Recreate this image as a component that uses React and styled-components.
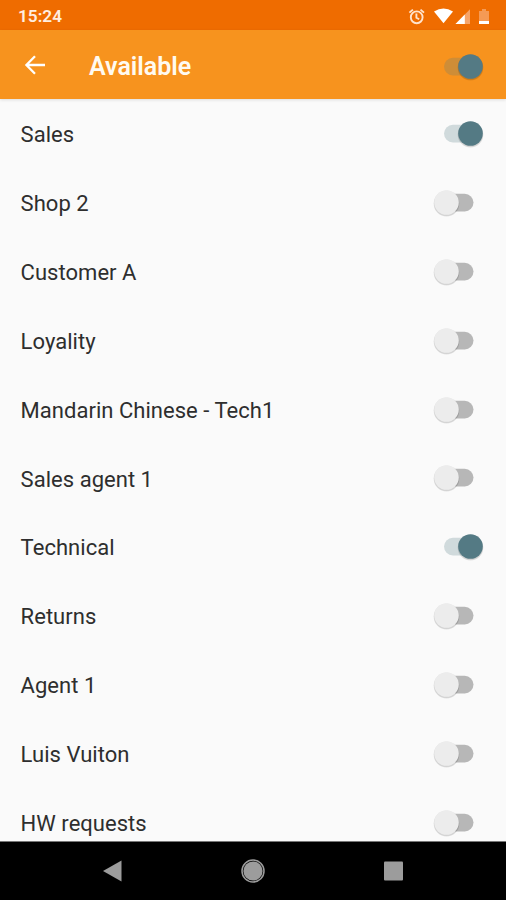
import React, { useState } from "react";
import styled, { createGlobalStyle } from "styled-components";

const GlobalStyle = createGlobalStyle`
  * {
    box-sizing: border-box;
  }
  body {
    margin: 0;
    background-color: #fafafa;
    font-family: Roboto, "Liberation Sans", sans-serif;
  }
`;

const Screen = styled.div`
  display: flex;
  flex-direction: column;
  width: 506px;
  height: 900px;
  overflow: hidden;
  background-color: #fafafa;
`;

const StatusBar = styled.div`
  display: flex;
  flex: none;
  align-items: center;
  justify-content: space-between;
  height: 30px;
  padding: 2px 16px 0 18px;
  background-color: #ef6c00;
  color: #ffeee0;
`;

const Clock = styled.span`
  font-size: 17.2px;
  font-weight: 600;
  line-height: 28px;
`;

const AppBar = styled.header`
  display: flex;
  flex: none;
  align-items: center;
  height: 69px;
  padding: 1px 20px 0 24px;
  background-color: #f7931e;
  box-shadow: 0 1px 3px rgba(0, 0, 0, 0.12);
`;

const BackButton = styled.button`
  display: flex;
  width: 22px;
  height: 22px;
  margin-top: -1px;
  padding: 0;
  border: none;
  background: none;
  cursor: pointer;
`;

const Title = styled.h1`
  flex: 1;
  margin: 3px 0 0 43px;
  color: #fffaf0;
  font-size: 25px;
  font-weight: 600;
  line-height: 30px;
`;

const List = styled.ul`
  flex: 1;
  min-height: 0;
  margin: 0;
  padding: 0;
  overflow: hidden;
  list-style: none;
`;

const Row = styled.li`
  display: flex;
  align-items: center;
  justify-content: space-between;
  height: 68.9px;
  padding: 0 20px 0 20.6px;
`;

const Label = styled.span`
  padding-top: 3.4px;
  color: #2e2e2e;
  font-size: 22px;
  letter-spacing: 0.03px;
  line-height: 28px;
`;

const SwitchButton = styled.button`
  display: flex;
  width: 56px;
  height: 32px;
  margin-top: 1px;
  padding: 0;
  border: none;
  background: none;
  cursor: pointer;

  ${AppBar} & {
    margin-top: 3px;
  }
`;

const NavBar = styled.nav`
  display: flex;
  flex: none;
  align-items: center;
  justify-content: space-between;
  height: 59px;
  padding: 0 101px;
  border-top: 1px solid #777;
  background-color: #000;
`;

const StatusIcons = () => (
  <svg width="76" height="24" viewBox="414 3 76 24">
    <g fill="none" stroke="#ffe3cd" strokeWidth="1.9">
      <circle cx="416.7" cy="16.3" r="5.9" />
      <path d="M416.4 12.5v4.2l2.8 1.6M409.4 11.6l3.5-3M424 11.6l-3.5-3" />
    </g>
    <path d="M434 10.5Q443.5 4.5 453 10.5L443.5 22.3z" fill="#fff" />
    <path d="M470 8.3V23h-14.5z" fill="#f6a469" />
    <path d="M464.8 13.6V23h-9.3z" fill="#fff" />
    <path d="M482 8h4v2h3v13h-10V10h3z" fill="#f59a55" />
    <path d="M479 20h10v3h-10z" fill="#fff" />
  </svg>
);

const StatusIconBox = styled.div`
  display: flex;
  svg {
    overflow: visible;
  }
`;

const Switch = ({ checked, onToggle, label }) => (
  <SwitchButton
    role="switch"
    aria-checked={checked}
    aria-label={label}
    onClick={onToggle}
  >
    <svg width="56" height="32" viewBox="0 0 56 32">
      <rect
        x={checked ? 14 : 8}
        y="6.8"
        width={checked ? 32 : 35.5}
        height="17.6"
        rx="8.8"
        fill={checked ? "#547a84" : "#b7b7b7"}
        fillOpacity={checked ? 0.25 : 1}
      />
      <circle cx={checked ? 40.5 : 16.5} cy="16.8" r="12.8" fill="#000" opacity="0.1" />
      <circle cx={checked ? 40.5 : 16.5} cy="16.2" r="12.7" fill="#000" opacity="0.06" />
      <circle
        cx={checked ? 40.5 : 16.5}
        cy="15.5"
        r="12.3"
        fill={checked ? "#547a84" : "#ececec"}
      />
    </svg>
  </SwitchButton>
);

const initialQueues = [
  { name: "Sales", on: true },
  { name: "Shop 2", on: false },
  { name: "Customer A", on: false },
  { name: "Loyality", on: false },
  { name: "Mandarin Chinese - Tech1", on: false },
  { name: "Sales agent 1", on: false },
  { name: "Technical", on: true },
  { name: "Returns", on: false },
  { name: "Agent 1", on: false },
  { name: "Luis Vuiton", on: false },
  { name: "HW requests", on: false },
];

const App = () => {
  const [available, setAvailable] = useState(true);
  const [queues, setQueues] = useState(initialQueues);

  const toggleQueue = (name) => {
    setQueues(queues.map((q) => (q.name === name ? { ...q, on: !q.on } : q)));
  };

  return (
    <Screen>
      <GlobalStyle />
      <StatusBar>
        <Clock>15:24</Clock>
        <StatusIconBox>
          <StatusIcons />
        </StatusIconBox>
      </StatusBar>
      <AppBar>
        <BackButton aria-label="Back">
          <svg width="22" height="22" viewBox="0 0 22 22">
            <path
              d="M21 11H3M11 2.2L2.4 11l8.6 8.8"
              fill="none"
              stroke="#fff"
              strokeWidth="2.3"
            />
          </svg>
        </BackButton>
        <Title>Available</Title>
        <Switch
          checked={available}
          onToggle={() => setAvailable(!available)}
          label="Available"
        />
      </AppBar>
      <List>
        {queues.map((queue) => (
          <Row key={queue.name}>
            <Label>{queue.name}</Label>
            <Switch
              checked={queue.on}
              onToggle={() => toggleQueue(queue.name)}
              label={queue.name}
            />
          </Row>
        ))}
      </List>
      <NavBar>
        <svg width="22" height="24" viewBox="0 0 22 24">
          <path d="M2 12L20.5 1.5v21z" fill="#9c9c9c" />
        </svg>
        <svg width="24" height="24" viewBox="0 0 24 24">
          <circle cx="12" cy="12" r="11" fill="none" stroke="#9c9c9c" strokeWidth="1.5" />
          <circle cx="12" cy="12" r="9.6" fill="#9c9c9c" />
        </svg>
        <svg width="22" height="24" viewBox="0 0 22 24">
          <rect x="1" y="2.5" width="19" height="19" rx="1" fill="#9c9c9c" />
        </svg>
      </NavBar>
    </Screen>
  );
};

export default App;
